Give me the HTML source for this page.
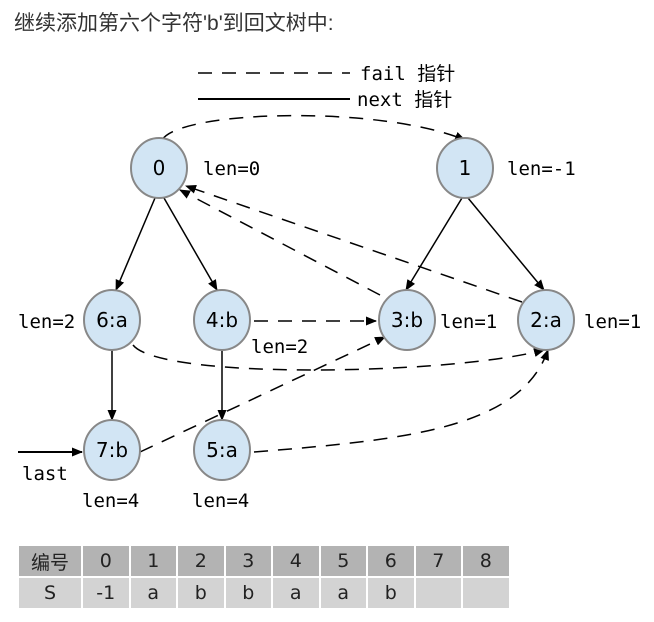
<!DOCTYPE html>
<html><head><meta charset="utf-8"><style>
body{margin:0;background:#fff;width:654px;height:622px;overflow:hidden;position:relative}
.t{position:absolute;left:14px;top:7px;font:21px "Liberation Sans","Noto Sans CJK SC",sans-serif;color:#333}
table{position:absolute;left:17px;top:544px;border-collapse:separate;border-spacing:2px;font:19px "DejaVu Sans","Noto Sans CJK SC",sans-serif;color:#222}
td{text-align:center;height:30px;padding:0}
tr.h td{background:#b3b3b3}
tr.r td{background:#d3d3d3}
</style></head><body>
<div class="t">继续添加第六个字符'b'到回文树中:</div>
<svg width="654" height="622" style="position:absolute;left:0;top:0" font-family="DejaVu Sans Mono, Liberation Mono, Noto Sans CJK SC, monospace" font-size="19">
<defs><marker id="a" markerWidth="11" markerHeight="9" refX="10" refY="4.5" orient="auto" markerUnits="userSpaceOnUse"><path d="M0,0L11,4.5L0,9z" fill="#000"/></marker></defs>
<g stroke="#000" stroke-width="1.5" fill="none">
<line x1="198" y1="73" x2="350" y2="73" stroke-dasharray="14,10"/>
<line x1="198" y1="99" x2="350" y2="99" stroke-width="2"/>
<g stroke-dasharray="14,10">
<path d="M162,140 C180,110 380,105 465,140" marker-end="url(#a)"/>
<path d="M380,295 L180,190" marker-end="url(#a)"/>
<path d="M522,302 L186,186" marker-end="url(#a)"/>
<path d="M254,321 L376,321" marker-end="url(#a)"/>
<path d="M133,345 C160,380 450,375 544,350" marker-end="url(#a)"/>
<path d="M140,452 L385,337" marker-end="url(#a)"/>
<path d="M254,452 C400,440 520,430 548,350" marker-end="url(#a)"/>
</g>
<line x1="155" y1="198" x2="116" y2="290" marker-end="url(#a)"/>
<line x1="164" y1="198" x2="217" y2="290" marker-end="url(#a)"/>
<line x1="462" y1="198" x2="406" y2="290" marker-end="url(#a)"/>
<line x1="468" y1="198" x2="544" y2="290" marker-end="url(#a)"/>
<line x1="112" y1="350" x2="112" y2="420" marker-end="url(#a)"/>
<line x1="222" y1="350" x2="222" y2="420" marker-end="url(#a)"/>
<line x1="18" y1="452" x2="82" y2="452" stroke-width="2" marker-end="url(#a)"/>
</g>
<g fill="#d2e5f4" stroke="#888" stroke-width="2">
<ellipse cx="159" cy="168" rx="28" ry="30"/>
<ellipse cx="465" cy="168" rx="28" ry="30"/>
<ellipse cx="112" cy="320" rx="28" ry="30"/>
<ellipse cx="222" cy="320" rx="28" ry="30"/>
<ellipse cx="407" cy="320" rx="28" ry="30"/>
<ellipse cx="546" cy="320" rx="28" ry="30"/>
<ellipse cx="112" cy="450" rx="28" ry="30"/>
<ellipse cx="222" cy="450" rx="28" ry="30"/>
</g>
<g fill="#000" text-anchor="middle" font-family="DejaVu Sans, sans-serif" font-size="20">
<text x="159" y="175">0</text><text x="465" y="175">1</text>
<text x="112" y="327">6:a</text><text x="222" y="327">4:b</text>
<text x="407" y="327">3:b</text><text x="546" y="327">2:a</text>
<text x="112" y="457">7:b</text><text x="222" y="457">5:a</text>
</g>
<g fill="#000">
<text x="360" y="80">fail 指针</text><text x="357" y="106">next 指针</text>
<text x="203" y="175">len=0</text><text x="507" y="175">len=-1</text>
<text x="18" y="328">len=2</text><text x="251" y="353">len=2</text>
<text x="440" y="328">len=1</text><text x="584" y="328">len=1</text>
<text x="22" y="480">last</text>
<text x="82" y="507">len=4</text><text x="192" y="507">len=4</text>
</g>
</svg>
<table>
<tr class="h"><td style="width:62px">编号</td><td style="width:45.5px">0</td><td style="width:45.5px">1</td><td style="width:45.5px">2</td><td style="width:45.5px">3</td><td style="width:45.5px">4</td><td style="width:45.5px">5</td><td style="width:45.5px">6</td><td style="width:45.5px">7</td><td style="width:45.5px">8</td></tr>
<tr class="r"><td>S</td><td>-1</td><td>a</td><td>b</td><td>b</td><td>a</td><td>a</td><td>b</td><td></td><td></td></tr>
</table>
</body></html>
